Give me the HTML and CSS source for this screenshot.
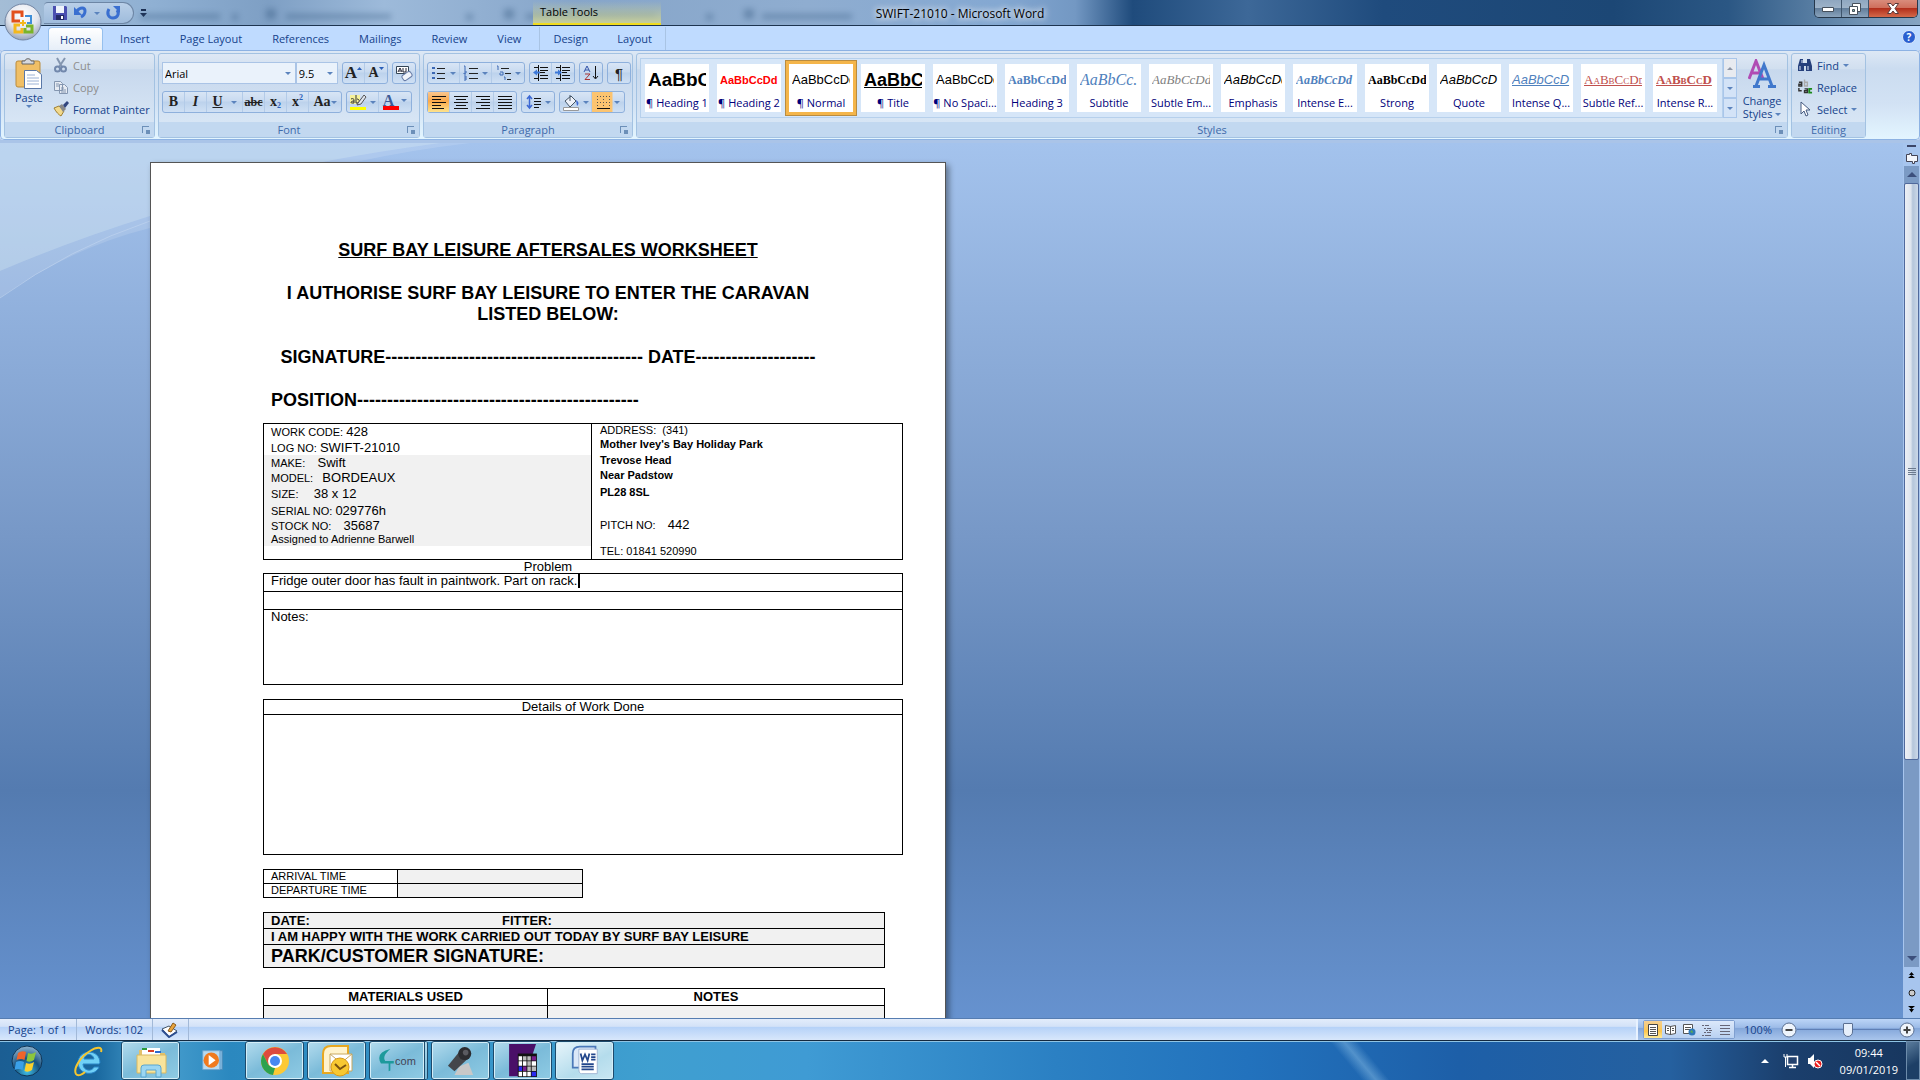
FILE: index.html
```html
<!DOCTYPE html>
<html lang="en">
<head>
  <meta charset="UTF-8" />
  <title>SWIFT-21010 - Microsoft Word</title>
  <meta name="viewport" content="width=device-width, initial-scale=1" />
  <link rel="stylesheet" href="styles.css">
</head>
<body>

<header class="titlebar">
  <div class="quick-access">
    <button class="icon-btn" aria-label="Save">
      <svg width="16" height="16" viewBox="0 0 16 16"><path d="M1 1h13l1 1v13H1z" fill="#4a4fb0"/><path d="M4 1h8v7H4z" fill="#eef3fb"/><path d="M4 10h8v5H4z" fill="#232a66"/><path d="M9 11h2v3H9z" fill="#fff"/></svg>
    </button>
    <button class="icon-btn" aria-label="Undo">
      <svg width="16" height="16" viewBox="0 0 16 16"><path d="M4 6c3-4 8-4 8 0 0 3-2 5-4 6" fill="none" stroke="#3a6fd0" stroke-width="3"/><path d="M1 2v8h8z" fill="#3a6fd0"/></svg>
    </button>
    <span class="caret"></span>
    <button class="icon-btn" aria-label="Repeat">
      <svg width="16" height="16" viewBox="0 0 16 16"><path d="M4 4c-3 5 0 9 4 9s7-4 4-8" fill="none" stroke="#3a6fd0" stroke-width="3"/><path d="M8 1h7v7z" fill="#3a6fd0"/></svg>
    </button>
  </div>
  <button class="icon-btn customise" aria-label="Customise Quick Access Toolbar">
    <svg width="7" height="8" viewBox="0 0 7 8"><path d="M1 0h5v2H1zM0 4h7L3.500 8z" fill="#1c2f52"/></svg>
  </button>
  <svg class="ghost-tabs" viewBox="0 0 1000 24" width="1000" height="24">
    <g fill="#31557c"><rect x="0" y="14" width="80" height="5"/><rect x="92" y="14" width="6" height="6"/><rect x="126" y="9" width="10" height="10"/><rect x="146" y="14" width="105" height="5"/><rect x="326" y="14" width="7" height="6"/><rect x="364" y="9" width="10" height="10"/><rect x="386" y="14" width="130" height="5"/><rect x="566" y="14" width="7" height="6"/><rect x="604" y="9" width="10" height="10"/><rect x="622" y="14" width="90" height="5"/></g>
  </svg>
  <div class="table-tools">Table Tools</div>
  <h1 class="window-title">SWIFT-21010 - Microsoft Word</h1>
  <div class="window-buttons">
    <button class="win-min" aria-label="Minimise"><svg width="12" height="6"><path d="M.5 1.500h11v4H.5z" fill="#fff" stroke="#46505c"/></svg></button>
    <button class="win-max" aria-label="Restore"><svg width="12" height="12"><path d="M3.500.5h8v8h-8z" fill="#fff" stroke="#46505c"/><path d="M.5 3.500h8v8h-8z" fill="#fff" stroke="#46505c"/><path d="M3.500 6.500h2v2h-2z" fill="#8ba" stroke="#46505c"/></svg></button>
    <button class="win-close" aria-label="Close"><svg width="12" height="11"><path d="M.5.5h3.500l2 2.500 2-2.500h3.500L8 5.500l3.500 5H8L6 8l-2 2.500H.5L4 5.500z" fill="#fff" stroke="#5a3a3a"/></svg></button>
  </div>
</header>

<button class="office" aria-label="Office Button">
  <svg width="38" height="38" viewBox="0 0 38 38">
    <defs><radialGradient id="orb" cx="50%" cy="30%" r="75%"><stop offset="0" stop-color="#fff"/><stop offset=".55" stop-color="#e3e6ee"/><stop offset="1" stop-color="#8c99b0"/></radialGradient></defs>
    <circle cx="19" cy="19" r="18" fill="url(#orb)" stroke="#7285a3"/>
    <g fill="none" stroke-width="3"><path d="M16 18H9V9h9v5" stroke="#e2501c"/><path d="M21 13h6v7h-4" stroke="#3f8fd8" stroke-width="2"/><path d="M16 22h-5v7h7v-4" stroke="#f4b81e"/><path d="M22 23h6v6h-7v-4" stroke="#7ab428"/></g>
    <path d="M16 20h6M19 17v6" stroke="#f4b81e" stroke-width="2"/>
  </svg>
</button>

<nav class="tabs">
  <a href="#" class="tab active">Home</a>
  <a href="#" class="tab">Insert</a>
  <a href="#" class="tab">Page Layout</a>
  <a href="#" class="tab">References</a>
  <a href="#" class="tab">Mailings</a>
  <a href="#" class="tab">Review</a>
  <a href="#" class="tab">View</a>
  <div class="context-tabs">
    <a href="#" class="tab">Design</a>
    <a href="#" class="tab">Layout</a>
  </div>
  <button class="help" aria-label="Help">?</button>
</nav>

<section class="ribbon">
  <div class="group clipboard">
    <div class="group-body">
      <button class="big-btn">
        <svg width="28" height="32" viewBox="0 0 28 32"><rect x="1" y="3" width="24" height="26" rx="2" fill="#f0bf66" stroke="#b98b3c"/><path d="M7 6V3h3c0-3 6-3 6 0h3v3z" fill="#d6d9de" stroke="#666"/><path d="M9.500 12.500h12l5 4v14h-17z" fill="#fff" stroke="#5a78a8"/><path d="M12 17h8M12 20h12M12 23h12M12 26h12" stroke="#9bb2d6"/></svg>
        <span>Paste</span>
        <span class="caret"></span>
      </button>
      <div class="stack">
        <button class="row-btn" disabled><svg width="16" height="16" viewBox="0 0 16 16"><path d="M4 1l5 9M12 1L6 10" stroke="#8496b0" stroke-width="2"/><circle cx="4.500" cy="12" r="2.500" fill="none" stroke="#7288ac" stroke-width="2"/><circle cx="10.500" cy="12" r="2.500" fill="none" stroke="#7288ac" stroke-width="2"/></svg>Cut</button>
        <button class="row-btn" disabled><svg width="16" height="16" viewBox="0 0 16 16"><path d="M1.500 2.500h6l2 2v7h-8zM6.500 5.500h5l3 3v6h-8z" fill="#e6ebf3" stroke="#8496b0"/><path d="M3 5h3M3 7h3M8 9h3M8 11h5M8 13h5" stroke="#8496b0"/></svg>Copy</button>
        <button class="row-btn"><svg width="16" height="16" viewBox="0 0 16 16"><path d="M1 7l5-2 5 5-3 5C6 14 3 11 1 7z" fill="#f2d98c" stroke="#a08030"/><path d="M6 5l3-2 4 5-3 3z" fill="#888"/><path d="M10 4l4-4 2 2-4 5z" fill="#31457e"/></svg>Format Painter</button>
      </div>
    </div>
    <div class="group-label">Clipboard<i class="launcher"></i></div>
  </div>

  <div class="group font">
    <div class="group-body rows">
      <div class="tool-row">
        <label class="combo combo-font"><select aria-label="Font"><option>Arial</option></select><span class="caret"></span></label>
        <label class="combo combo-size"><select aria-label="Font Size"><option>9.5</option></select><span class="caret"></span></label>
        <div class="tools after-combo">
          <button class="tool glyph glyph-lg" aria-label="Grow Font">A<svg width="5" height="3"><path d="M0 3h5L2.500 0z" fill="#2b5fb8"/></svg></button>
          <button class="tool glyph" aria-label="Shrink Font">A<svg width="5" height="3"><path d="M0 0h5L2.500 3z" fill="#2b5fb8"/></svg></button>
        </div>
        <div class="tools">
          <button class="tool" aria-label="Clear Formatting"><svg width="18" height="18" viewBox="0 0 18 18"><path d="M1.500 2.500h12v7h-12z" fill="#fff" stroke="#345"/><path d="M3 8l2-4 2 4M8 4v4h3V4M4 7h2" fill="none" stroke="#223"/><rect x="7" y="9" width="10" height="6" rx="2" transform="rotate(-35 12 12)" fill="#f2f4fa" stroke="#667aa5"/></svg></button>
        </div>
      </div>
      <div class="tool-row">
        <div class="tools">
          <button class="tool glyph"><b>B</b></button>
          <button class="tool glyph"><i>I</i></button>
          <button class="tool split-lg glyph"><u>U</u><span class="caret"></span></button>
          <button class="tool glyph strike">abc</button>
          <button class="tool glyph">x<sub>2</sub></button>
          <button class="tool glyph">x<sup>2</sup></button>
          <button class="tool split glyph">Aa<span class="caret"></span></button>
        </div>
        <div class="tools">
          <button class="tool split" aria-label="Highlight"><svg width="18" height="18" viewBox="0 0 18 18"><path d="M1 2h10v9H1z" fill="#f6f29a"/><path d="M2 6c2-1 3 0 3 1v3H3c-2 0-1-2 2-2M7 2v8h1c3 0 3-4 0-4" fill="none" stroke="#333"/><path d="M9 10l6-8 2 2-5 7-4 1z" fill="#dfe4ee" stroke="#555"/><path d="M1 14h16v3H1z" fill="#ff0"/></svg><span class="caret"></span></button>
          <button class="tool split glyph font-colour">A<span class="caret"></span></button>
        </div>
      </div>
    </div>
    <div class="group-label">Font<i class="launcher"></i></div>
  </div>

  <div class="group paragraph">
    <div class="group-body rows">
      <div class="tool-row">
        <div class="tools">
          <button class="tool split" aria-label="Bullets"><svg width="16" height="16" viewBox="0 0 16 16"><path d="M1 2h3v2H1zM1 7h3v2H1zM1 12h3v2H1z" fill="#3c68b4"/><path d="M6 3.500h8M6 8.500h8M6 13.500h8" stroke="#222"/></svg><span class="caret"></span></button>
          <button class="tool split" aria-label="Numbering"><svg width="16" height="16" viewBox="0 0 16 16"><path d="M1 1h1v4M1 6h2v2H1v1h2M1 11h2v4H1M1 13h2" fill="none" stroke="#3c68b4"/><path d="M6 3.500h9M6 8.500h9M6 13.500h9" stroke="#222"/></svg><span class="caret"></span></button>
          <button class="tool split" aria-label="Multilevel List"><svg width="16" height="16" viewBox="0 0 16 16"><path d="M1 1h1v4M4 7h3v3H4V8M8 12h1v3" fill="none" stroke="#3c68b4"/><path d="M5 3.500h8M9 8.500h6M11 14.500h4" stroke="#222"/></svg><span class="caret"></span></button>
        </div>
        <div class="tools">
          <button class="tool" aria-label="Decrease Indent"><svg width="16" height="16" viewBox="0 0 16 16"><path d="M1 2.500h4M7 2.500h8M7 5.500h8M7 7.500h5M7 10.500h8M1 13.500h4M7 13.500h8M5.500 0v16" stroke="#111"/><path d="M0 7.500l4-3v2h3v2H4v2z" fill="#3c78d8"/></svg></button>
          <button class="tool" aria-label="Increase Indent"><svg width="16" height="16" viewBox="0 0 16 16"><path d="M1 2.500h4M7 2.500h8M7 5.500h8M7 7.500h5M7 10.500h8M1 13.500h4M7 13.500h8M5.500 0v16" stroke="#111"/><path d="M7 7.500l-4-3v2H0v2h3v2z" fill="#3c78d8"/></svg></button>
        </div>
        <div class="tools">
          <button class="tool" aria-label="Sort"><svg width="16" height="16" viewBox="0 0 16 16"><path d="M1 7l3-6 3 6M2 5h4" fill="none" stroke="#3454a8"/><path d="M2 9h5l-5 5.500h5" fill="none" stroke="#a83434"/><path d="M12.500 1v12M10 11l2.500 3 2.500-3" fill="none" stroke="#111"/></svg></button>
        </div>
        <div class="tools">
          <button class="tool glyph-sans" aria-label="Show paragraph marks">¶</button>
        </div>
      </div>
      <div class="tool-row">
        <div class="tools">
          <button class="tool on" aria-label="Align Left"><svg width="16" height="14"><path d="M1 1.500h14M1 4.500h9M1 7.500h14M1 10.500h9M1 13.500h12" stroke="#111"/></svg></button>
          <button class="tool" aria-label="Centre"><svg width="16" height="14"><path d="M1 1.500h14M3 4.500h10M1 7.500h14M3 10.500h10M1 13.500h14" stroke="#111"/></svg></button>
          <button class="tool" aria-label="Align Right"><svg width="16" height="14"><path d="M1 1.500h14M6 4.500h9M1 7.500h14M6 10.500h9M1 13.500h14" stroke="#111"/></svg></button>
          <button class="tool" aria-label="Justify"><svg width="16" height="14"><path d="M1 1.500h14M1 4.500h14M1 7.500h14M1 10.500h14M1 13.500h14" stroke="#111"/></svg></button>
        </div>
        <div class="tools">
          <button class="tool split" aria-label="Line Spacing"><svg width="16" height="16" viewBox="0 0 16 16"><path d="M3.500 2v12M1 5l2.500-3L6 5M1 11l2.500 3L6 11" fill="none" stroke="#3c68d4" stroke-width="1.500"/><path d="M8 4.500h7M8 7.500h7M8 10.500h7M8 13.500h5" stroke="#111"/></svg><span class="caret"></span></button>
        </div>
        <div class="tools">
          <button class="tool split" aria-label="Shading"><svg width="18" height="17" viewBox="0 0 18 17"><path d="M3 7l6-5 5 5-6 6z" fill="#eef2fa" stroke="#456"/><path d="M8 1v6" stroke="#456"/><path d="M14 6c3 2 3 4 1 6z" fill="#3c68d4"/><path d="M1.500 13.500h15v3h-15z" fill="#fff" stroke="#999"/></svg><span class="caret"></span></button>
          <button class="tool split on-first" aria-label="Borders"><svg width="15" height="15" viewBox="0 0 15 15"><path d="M1.500 1v11M7.500 1v11M13.500 1v11M1 1.500h13M1 7.500h13" stroke="#555" stroke-dasharray="1 2"/><path d="M1 13.500h13" stroke="#111"/></svg><span class="caret"></span></button>
        </div>
      </div>
    </div>
    <div class="group-label">Paragraph<i class="launcher"></i></div>
  </div>

  <div class="group styles">
    <div class="group-body">
      <div class="gallery">
        <button class="style-item"><span class="preview p-h1">AaBbC</span><span class="name">¶ Heading 1</span></button>
        <button class="style-item"><span class="preview p-h2">AaBbCcDd</span><span class="name">¶ Heading 2</span></button>
        <button class="style-item selected"><span class="preview">AaBbCcDd</span><span class="name">¶ Normal</span></button>
        <button class="style-item"><span class="preview p-title">AaBbC</span><span class="name">¶ Title</span></button>
        <button class="style-item"><span class="preview">AaBbCcDd</span><span class="name">¶ No Spaci...</span></button>
        <button class="style-item"><span class="preview p-h3">AaBbCcDd</span><span class="name">Heading 3</span></button>
        <button class="style-item"><span class="preview p-subtitle">AaBbCc.</span><span class="name">Subtitle</span></button>
        <button class="style-item"><span class="preview p-subtle">AaBbCcDd</span><span class="name">Subtle Em...</span></button>
        <button class="style-item"><span class="preview p-em">AaBbCcDd</span><span class="name">Emphasis</span></button>
        <button class="style-item"><span class="preview p-intense">AaBbCcDd</span><span class="name">Intense E...</span></button>
        <button class="style-item"><span class="preview p-strong">AaBbCcDd</span><span class="name">Strong</span></button>
        <button class="style-item"><span class="preview p-em">AaBbCcD</span><span class="name">Quote</span></button>
        <button class="style-item"><span class="preview p-iquote">AaBbCcD</span><span class="name">Intense Q...</span></button>
        <button class="style-item"><span class="preview p-ref">AaBbCcDd</span><span class="name">Subtle Ref...</span></button>
        <button class="style-item"><span class="preview p-ref p-ref-bold">AaBbCcD</span><span class="name">Intense R...</span></button>
      </div>
      <div class="gallery-scroll">
        <button disabled aria-label="Previous row"><span class="caret up"></span></button>
        <button aria-label="Next row"><span class="caret"></span></button>
        <button aria-label="More styles"><span class="caret more"></span></button>
      </div>
      <button class="big-btn change-styles">
        <svg width="28" height="29" viewBox="0 0 28 29"><path d="M1 20L8 2l7 18M4 14h8" fill="none" stroke="#b04cb4" stroke-width="3"/><path d="M8 27L16 6l8 21M11 20h10M5 27.500h7M20 27.500h8" fill="none" stroke="#4078cc" stroke-width="3"/></svg>
        <span>Change</span>
        <span>Styles <span class="caret"></span></span>
      </button>
    </div>
    <div class="group-label">Styles<i class="launcher"></i></div>
  </div>

  <div class="group editing">
    <div class="group-body">
      <div class="stack">
        <button class="row-btn"><svg width="16" height="16" viewBox="0 0 16 16"><path d="M3 2h3v4h4V2h3l2 7v5H9V9H7v5H1V9z" fill="#26407c"/><path d="M3 9v4M11 9v4M5 3v3" stroke="#dfe8f8"/></svg>Find <span class="caret"></span></button>
        <button class="row-btn"><svg width="16" height="16" viewBox="0 0 17 16"><path d="M2 3h3v4H2V5h3" fill="none" stroke="#333" stroke-width="1.500"/><path d="M8 0v7h3V3H8" fill="none" stroke="#aaa" stroke-width="1.500"/><path d="M2 9v3h3M8 10h3v4H8v-2h3" fill="none" stroke="#333" stroke-width="1.500"/><path d="M16 10h-3v4h3" fill="none" stroke="#1a8a1a" stroke-width="2"/></svg>Replace</button>
        <button class="row-btn"><svg width="16" height="16" viewBox="0 0 16 16"><path d="M4 1v12l3-3 2 5 2-1-2-5h4z" fill="#fff" stroke="#455a80"/></svg>Select <span class="caret"></span></button>
      </div>
    </div>
    <div class="group-label">Editing</div>
  </div>
</section>

<main class="workspace">
  <svg class="swoosh" width="560" height="400" viewBox="0 0 560 400">
    <path d="M0 0h470Q300 20 150 85Q70 105 0 155z" fill="#fff" fill-opacity=".13"/>
    <path d="M0 0h440Q220 30 150 73Q70 98 0 128z" fill="#dff0f4" fill-opacity=".28"/>
    <path d="M0 155Q70 105 150 78" fill="none" stroke="#c8daf2" stroke-opacity=".5"/>
  </svg>

  <article class="page">
    <h2 class="doc-title">SURF BAY LEISURE AFTERSALES WORKSHEET</h2>
    <p class="authorise">I AUTHORISE SURF BAY LEISURE TO ENTER THE CARAVAN LISTED BELOW:</p>
    <p class="authorise">SIGNATURE------------------------------------------- DATE--------------------</p>
    <p class="position">POSITION-----------------------------------------------</p>

    <table class="details">
      <tr>
        <td class="unit">
          <div class="line first">WORK CODE: <b>428</b></div>
          <div class="line">LOG NO: <b>SWIFT-21010</b></div>
          <div class="shaded">
            <div class="line">MAKE: &nbsp;&nbsp; <b>Swift</b></div>
            <div class="line">MODEL: &nbsp; <b>BORDEAUX</b></div>
            <div class="line roomy">SIZE: &nbsp;&nbsp;&nbsp; <b>38 x 12</b></div>
            <div class="line">SERIAL NO: <b>029776h</b></div>
            <div class="line">STOCK NO: &nbsp;&nbsp; <b>35687</b></div>
            <div class="line small">Assigned to Adrienne Barwell</div>
          </div>
        </td>
        <td class="site">
          <div class="line small">ADDRESS: &nbsp;(341)</div>
          <address>
            <div class="line first">Mother Ivey's Bay Holiday Park</div>
            <div class="line">Trevose Head</div>
            <div class="line">Near Padstow</div>
            <div class="line roomy">PL28 8SL</div>
          </address>
          <div class="line pitch">PITCH NO: &nbsp;&nbsp; <b>442</b></div>
          <div class="line tel">TEL: 01841 520990</div>
        </td>
      </tr>
    </table>

    <p class="problem">Problem</p>
    <table class="notes">
      <tr><td>Fridge outer door has fault in paintwork. Part on rack.<span class="cursor"></span></td></tr>
      <tr><td></td></tr>
      <tr class="notes-row"><td>Notes:</td></tr>
    </table>

    <table class="work">
      <tr><th>Details of Work Done</th></tr>
      <tr class="work-row"><td></td></tr>
    </table>

    <table class="times">
      <tr><th>ARRIVAL TIME</th><td></td></tr>
      <tr><th>DEPARTURE TIME</th><td></td></tr>
    </table>

    <table class="sign-off">
      <tr><td><div class="date-fitter"><span>DATE:</span><span>FITTER:</span></div></td></tr>
      <tr><td>I AM HAPPY WITH THE WORK CARRIED OUT TODAY BY SURF BAY LEISURE</td></tr>
      <tr class="customer"><td>PARK/CUSTOMER SIGNATURE:</td></tr>
    </table>

    <table class="materials">
      <tr><th class="used">MATERIALS USED</th><th>NOTES</th></tr>
      <tr><td></td><td></td></tr>
      <tr><td></td><td></td></tr>
    </table>
  </article>

  <aside class="scrollbar">
    <span class="splitter"></span>
    <button aria-label="View Ruler"><svg width="12" height="12" viewBox="0 0 12 12"><path d="M.5 2.500h3v-1h2v2h6v6h-3v2h-2v-2h-6z" fill="#f4f6fb" stroke="#445"/></svg></button>
    <div class="track">
      <button aria-label="Scroll up"><span class="caret up dark"></span></button>
      <div class="thumb"><span class="grip"></span></div>
      <button class="down" aria-label="Scroll down"><span class="caret dark"></span></button>
    </div>
    <button class="browse" aria-label="Previous Page"><svg width="7" height="7"><path d="M3.500 0L6 3H1zM3.500 3L7 6H0z"/></svg></button>
    <button class="browse" aria-label="Select Browse Object"><svg width="8" height="8"><circle cx="4" cy="4" r="3" fill="#ccc" stroke="#222"/></svg></button>
    <button class="browse" aria-label="Next Page"><svg width="7" height="7"><path d="M0 0h7L3.500 3zM1 3h5L3.500 6.500z"/></svg></button>
  </aside>
</main>

<footer class="statusbar">
  <span class="status">Page: 1 of 1</span>
  <span class="status">Words: 102</span>
  <button class="status proof" aria-label="Proofing"><svg width="18" height="16" viewBox="0 0 18 16"><path d="M1 7l7-3 8 5-8 6z" fill="#fff" stroke="#456"/><path d="M1 8l7 7 8-5" fill="none" stroke="#2b4d90" stroke-width="2"/><path d="M7 9l5-8 3 2-5 7z" fill="#e8a33c" stroke="#8a5a1a"/></svg></button>
  <div class="status-right">
    <div class="views">
      <button class="on" aria-label="Print Layout"><svg width="12" height="12"><path d="M1.500.5h9v11h-9z" fill="#fff" stroke="#444"/><path d="M3 3.500h6M3 5.500h6M3 7.500h6M3 9.500h6" stroke="#555"/></svg></button>
      <button aria-label="Full Screen Reading"><svg width="12" height="12"><path d="M.5 1.500l5 1 5-1v8l-5 1-5-1zM5.500 2v9" fill="#fff" stroke="#555"/><path d="M2 4.500h2M2 6.500h2M7 4.500h2M7 6.500h2" stroke="#555"/></svg></button>
      <button aria-label="Web Layout"><svg width="13" height="12"><path d="M.5.5h9v9h-9z" fill="#fff" stroke="#555"/><path d="M2 3.500h6M2 5.500h6" stroke="#555"/><circle cx="9" cy="8" r="3.500" fill="#2f78b8"/><path d="M7 8l2-2 1 3z" fill="#5fb04a"/></svg></button>
      <button aria-label="Outline"><svg width="12" height="12"><path d="M1 1.500h7M3 4.500h7M5 6.500h6M3 8.500h7M1 11.500h9" stroke="#667" stroke-dasharray="2 1 9"/></svg></button>
      <button aria-label="Draft"><svg width="12" height="12"><path d="M1 1.500h10M1 4.500h10M1 7.500h10M1 10.500h10" stroke="#667"/></svg></button>
    </div>
    <label class="zoom-label" for="zoom">100%</label>
    <button class="zoom-btn" aria-label="Zoom out"><svg width="16" height="16"><circle cx="8" cy="8" r="7" fill="#eef4fc" stroke="#5a6f92"/><path d="M4.500 8h7" stroke="#444" stroke-width="2"/></svg></button>
    <input id="zoom" class="zoom" type="range" min="10" max="190" value="100">
    <button class="zoom-btn" aria-label="Zoom in"><svg width="16" height="16"><circle cx="8" cy="8" r="7" fill="#eef4fc" stroke="#5a6f92"/><path d="M4.500 8h7M8 4.500v7" stroke="#444" stroke-width="2"/></svg></button>
  </div>
</footer>

<div class="taskbar">
  <button class="start" aria-label="Start">
    <svg width="38" height="38" viewBox="0 0 38 38">
      <defs><radialGradient id="start" cx="50%" cy="85%" r="85%"><stop offset="0" stop-color="#3fc0e8"/><stop offset=".5" stop-color="#17517f"/><stop offset="1" stop-color="#8fb6d2"/></radialGradient></defs>
      <circle cx="19" cy="19" r="15" fill="url(#start)" stroke="#0f3556"/>
      <path d="M10 11q4-3 8-1l-1.500 8q-4-2-8 0z" fill="#f0642a"/><path d="M20 11q4 2 8-1l-2 8q-4 3-7.500 1z" fill="#8cc63c"/><path d="M8 20q4-2 8 0l-1.500 8q-4-2-8 0z" fill="#3aa0e8"/><path d="M18 21q4 2 8-1l-2 8q-4 3-7.500 1z" fill="#fcd02c"/>
    </svg>
  </button>
  <button class="task plain" aria-label="Internet Explorer">
    <svg width="32" height="32" viewBox="0 0 32 32"><path d="M26 19H10c0 7 9 8 11 3h5c-3 9-20 9-21-4C5 4 27 3 27 18zM11 14h10c-1-6-9-6-10 0z" fill="#6fd0f6" stroke="#2a86c8"/><path d="M28 7c2-6-5-5-11-1C7 12 0 24 3 29c2 3 7 0 9-2" fill="none" stroke="#f6c62e" stroke-width="2"/></svg>
  </button>
  <button class="task" aria-label="Explorer">
    <svg width="34" height="34" viewBox="0 0 34 34"><path d="M5 6h7l2 3h17v20H5z" fill="#e3c16a"/><path d="M8 4h18v8H8z" fill="#fff"/><path d="M8 4h5v2H8z" fill="#2a9a3a"/><path d="M14 6h6v2h-6z" fill="#d8402a"/><path d="M21 7h6v2h-6z" fill="#2a6ad0"/><path d="M3 11h29v18H3z" fill="#f8e49c" stroke="#d8b860"/><path d="M7 33v-9q0-3 3-3h14q3 0 3 3v9h-5v-7H12v7z" fill="#9bd6f2" stroke="#5aa6d0"/></svg>
  </button>
  <button class="task plain" aria-label="Media Player">
    <svg width="24" height="26" viewBox="0 2 28 28"><path d="M7 4h18v22H7z" fill="#7db4dc" stroke="#4a8ab8"/><path d="M2 4h20v22H2z" fill="#b8daf0" stroke="#6aa4d0"/><circle cx="12" cy="15" r="9" fill="#f07a1e"/><path d="M9 9l8 6-8 6z" fill="#fff"/></svg>
  </button>
  <button class="task" aria-label="Chrome">
    <svg width="30" height="30" viewBox="0 0 30 30"><circle cx="15" cy="15" r="14" fill="#fcc934"/><path d="M3 8A14 14 0 0 1 27 8H15L8.500 19z" fill="#dd4b3e"/><path d="M3 8L8.500 19 15 22l-2 7A14 14 0 0 1 3 8z" fill="#2da24f"/><circle cx="15" cy="15" r="7" fill="#fff"/><circle cx="15" cy="15" r="5" fill="#4688f1"/></svg>
  </button>
  <button class="task" aria-label="Outlook">
    <svg width="34" height="34" viewBox="0 0 34 34"><path d="M3 10q0-8 8-8h17v27H3z" fill="#fff3cc" stroke="#e8a820" stroke-width="2"/><path d="M10 10h22v17H10z" fill="#fff" stroke="#c8a860"/><path d="M10 10l11 9 11-9" fill="none" stroke="#c8a860"/><circle cx="20" cy="23" r="9" fill="#f8c832" stroke="#d89a18"/><path d="M15 20l5 5 6-4" fill="none" stroke="#7a5210" stroke-width="2"/></svg>
  </button>
  <button class="task stacked" aria-label="4com">
    <svg width="17" height="24" viewBox="0 0 17 28"><path d="M13 0Q-5 4 2 17h9v9l2-1v-8h4v-3H7Q3 8 13 0z" fill="#1d9a9c"/></svg><span>com</span>
  </button>
  <button class="task" aria-label="Webcam">
    <svg width="28" height="30" viewBox="0 0 30 32"><path d="M13 22l10-4 5 13H8z" fill="#c8c8c8"/><path d="M1 21L15 4l9 8-16 15z" fill="#44464a"/><circle cx="19" cy="8" r="7" fill="#2c2c30"/><circle cx="20" cy="7" r="3" fill="#5a5a60"/></svg>
  </button>
  <button class="task" aria-label="Planner">
    <svg width="30" height="33" viewBox="0 0 34 38"><path d="M1 0h31l-4 12v25H1z" fill="#4a0f68"/><path d="M11 11h22v27H11z" fill="#111"/><g fill="#fff"><path d="M12 14h4v5h-4zM12 20h4v5h-4zM17 20h4v5h-4zM12 32h4v5h-4zM17 32h4v5h-4zM22 32h4v5h-4zM27 20h5v5h-5z"/></g><g fill="#bbb"><path d="M17 14h4v5h-4zM22 14h4v5h-4zM27 26h5v5h-5zM22 20h4v5h-4zM22 26h4v5h-4z"/></g><path d="M27 14h5v5h-5zM17 26h4v5h-4z" fill="#7a1f8a"/><path d="M12 26h4v5h-4zM27 32h5v5h-5z" fill="#2a2af0"/></svg>
  </button>
  <button class="task current" aria-label="Word">
    <svg width="28" height="31" viewBox="0 0 32 34"><path d="M2 9q0-8 8-8h18v24H2z" fill="#dbe8f8" stroke="#4a78b8" stroke-width="2"/><path d="M9 4h21v28H12q-3 0-3-5z" fill="#fff" stroke="#9ab0d0"/><path d="M11 9l2 8 3-7 3 7 2-8" fill="none" stroke="#23478c" stroke-width="2"/><path d="M23 10h5M23 13h5M23 16h5M12 21h14M12 24h14M12 27h14" stroke="#23478c" stroke-width="2"/></svg>
  </button>
  <div class="tray">
    <span class="caret up tray-up"></span>
    <svg width="16" height="16" viewBox="0 0 16 16"><path d="M4.500 3.500h10v8h-10zM6 14.500h7M9.500 12v2" fill="#24426e" stroke="#fff" stroke-width="1.500"/><path d="M1 1v3h3V1M2.500 4v10" fill="none" stroke="#fff"/></svg>
    <svg width="16" height="16" viewBox="0 0 16 16"><path d="M1 5h2l4-4v14l-4-4H1z" fill="#fff"/><circle cx="11" cy="11" r="4" fill="#e81c1c" stroke="#fff"/><path d="M9 9l4 4" stroke="#fff" stroke-width="1.500"/></svg>
    <div class="clock"><time>09:44</time><time>09/01/2019</time></div>
    <button class="show-desktop" aria-label="Show desktop"></button>
  </div>
</div>

</body>
</html>
```
FILE: styles.css
```css
* {
  box-sizing: border-box;
}
body {
  margin: 0;
  height: 100vh;
  display: flex;
  flex-direction: column;
  overflow: hidden;
  position: relative;
  font-family: "Open Sans", "Noto Sans", sans-serif;
  font-size: 11px;
  color: #15428b;
}
button {
  font: inherit;
  color: inherit;
  background: none;
  border: 0;
  padding: 0;
}
a {
  color: inherit;
  text-decoration: none;
}
svg {
  display: block;
  flex: none;
}
h1, h2, p, address {
  margin: 0;
  font-style: normal;
}
.caret {
  display: inline-block;
  border: 3px solid transparent;
  border-top-color: #5b83bd;
  border-bottom: 0;
}
.caret.up {
  border-top: 0;
  border-bottom: 3px solid #8d96a5;
}
.caret.dark {
  border-width: 5px;
  border-top-color: #3c4f7c;
  border-bottom: 0;
}
.caret.up.dark {
  border-top: 0;
  border-bottom: 5px solid #3c4f7c;
}

/* Title bar */
.titlebar {
  position: relative;
  flex: none;
  height: 26px;
  display: flex;
  border-bottom: 1px solid #1d3450;
  background: linear-gradient(90deg, #a4bdd6 0, #8fb0d3 8%, #7e9fc4 14%, #9dbada 20%, #86a5c9 30%, #8fadd0 42%, #84a8d2 52%, #7398c3 56%, #1f4b7c 59%, #3d6898 65%, #1f4b7d 72%, #1c4775 84%, #2b5784 90%, #7193b4 97%, #86a4c2 100%);
}
.quick-access {
  display: flex;
  align-items: center;
  gap: 5px;
  height: 22px;
  width: 90px;
  margin: 2px 0 0 44px;
  padding-left: 8px;
  border: 1px solid #6d86a5;
  border-left: 0;
  border-radius: 4px 11px 11px 0;
  background: linear-gradient(#b9cfe8, #9fbcdc);
}
.icon-btn {
  display: flex;
  align-items: center;
}
.customise {
  margin-left: 6px;
}
.ghost-tabs {
  position: absolute;
  left: 140px;
  top: 0;
  opacity: .4;
  filter: blur(3px);
}
.table-tools {
  position: absolute;
  left: 533px;
  bottom: 0;
  width: 128px;
  padding-left: 7px;
  line-height: 22px;
  color: #000;
  background: linear-gradient(#c5cd9a00, #c5cd9a);
  border-bottom: 2px solid #f0dc1e;
}
.window-title {
  position: absolute;
  left: 0;
  right: 0;
  top: 4px;
  text-align: center;
  font-size: 12px;
  font-weight: 400;
  line-height: 20px;
  color: #000;
  text-shadow: 0 0 6px #fff, 0 0 8px #fff;
}
.window-buttons {
  position: relative;
  display: flex;
  height: 18px;
  margin: 0 2px 0 auto;
  border: 1px solid #26384c;
  border-top: 0;
  border-radius: 0 0 5px 5px;
  overflow: hidden;
}
.window-buttons button {
  display: flex;
  justify-content: center;
  align-items: center;
  width: 27px;
  border-right: 1px solid #3f556d;
  background: linear-gradient(#8fa7c0, #9db2c8 45%, #627e9b 50%, #8aa3bc);
}
.window-buttons .win-close {
  width: 48px;
  border: 0;
  background: linear-gradient(#d98c7c, #cf6f5c 45%, #b22f1c 50%, #d4694a);
}
.office {
  position: absolute;
  left: 4px;
  top: 3px;
  z-index: 2;
}

/* Ribbon tabs */
.tabs {
  position: relative;
  flex: none;
  display: flex;
  align-items: flex-end;
  gap: 4px;
  height: 24px;
  padding-left: 48px;
  background: #bfdbff;
  font-size: 11px;
}
.tab {
  height: 23px;
  padding: 0 13px;
  line-height: 24px;
}
.tab.active {
  border: 1px solid #96c0ee;
  border-bottom: 0;
  border-radius: 4px 4px 0 0;
  padding: 0 11px;
  background: linear-gradient(#fff, #e6eef8);
}
.context-tabs {
  display: flex;
  gap: 3px;
  margin-left: 1px;
  border: solid #a9c4e4;
  border-width: 0 1px;
}
.help {
  width: 14px;
  height: 14px;
  margin: 0 4px 6px auto;
  border: 1px solid #dce8fa;
  border-radius: 50%;
  background: #2a5fd0;
  color: #fff;
  font-size: 10px;
  font-weight: 700;
  line-height: 12px;
}

/* Ribbon */
.ribbon {
  flex: none;
  display: flex;
  gap: 3px;
  height: 90px;
  margin: 0;
  padding: 2px 53px 3px 3px;
  border: 1px solid #8db2e3;
  border-radius: 4px;
  background: linear-gradient(#dde8f5, #cbdcf0 20%, #d2e2f4 60%, #e3f5ff);
  box-shadow: 0 0 0 3px #b2cbee;
}
.group {
  display: flex;
  flex-direction: column;
  height: 85px;
  border: 1px solid #a3c2e2;
  border-radius: 3px;
  background: linear-gradient(#dee8f5, #d1dfef 18%, #c7d8ed 19%, #d8e6f5 85%);
}
.group-body {
  flex: 1;
  display: flex;
}
.group-label {
  position: relative;
  height: 15px;
  line-height: 15px;
  text-align: center;
  font-size: 11px;
  color: #3e6aaa;
  background: #c2d8f0;
}
.launcher {
  position: absolute;
  right: 5px;
  top: 4px;
  width: 7px;
  height: 7px;
  border: solid #6c8fb8;
  border-width: 1px 0 0 1px;
}
.launcher::after {
  content: "";
  position: absolute;
  left: 3px;
  top: 3px;
  width: 4px;
  height: 4px;
  background: #6c8fb8;
}
.clipboard { width: 151px; }
.font { width: 262px; }
.paragraph { width: 210px; }
.styles { flex: 1; min-width: 0; }
.editing { width: 75px; }
.big-btn {
  display: flex;
  flex-direction: column;
  align-items: center;
  width: 46px;
  padding: 4px 0 0 2px;
  line-height: 15px;
}
.stack {
  display: flex;
  flex-direction: column;
  padding-left: 2px;
}
.row-btn {
  display: flex;
  align-items: center;
  gap: 4px;
  height: 22px;
  white-space: nowrap;
}
.row-btn:disabled {
  color: #8d8d8d;
}
.rows {
  flex-direction: column;
  gap: 7px;
  padding: 8px 3px 0;
}
.tool-row {
  display: flex;
  gap: 4px;
}
.combo {
  display: flex;
  align-items: center;
  height: 22px;
  border: 1px solid #aac4e6;
  background: #eaf2fb;
}
.combo select {
  flex: 1;
  min-width: 0;
  appearance: none;
  border: 0;
  padding: 0 2px;
  background: none;
  font: inherit;
  color: #000;
}
.combo .caret {
  margin-right: 4px;
}
.combo-font { width: 136px; }
.combo-size { width: 43px; margin-left: -4px; }
.tools {
  display: flex;
  height: 22px;
  border: 1px solid #8eb0dc;
  border-radius: 3px;
  background: linear-gradient(#d8e5f5, #c8daf0 45%, #bcd2ec 50%, #cfe0f4);
}
.tool {
  display: flex;
  align-items: center;
  justify-content: center;
  gap: 3px;
  width: 22px;
  border-right: 1px solid #b3cbe8;
}
.tool:last-child {
  border-right: 0;
}
.tool.split { width: 32px; }
.tool.split-lg { width: 36px; gap: 8px; }
.tool.on {
  background: linear-gradient(#f9c690, #fba94a 45%, #fde28c);
}
.tool.on-first {
  background: linear-gradient(90deg, #fcc470 20px, transparent 21px);
}
.glyph {
  font-family: "Liberation Serif", serif;
  font-size: 14px;
  font-weight: 700;
  color: #222;
  gap: 0;
}
.glyph svg {
  align-self: flex-start;
  margin-top: 4px;
}
.glyph sup,
.glyph sub {
  font-size: 8px;
  line-height: 8px;
  color: #2b5fb8;
}
.glyph sup { align-self: flex-start; margin-top: 2px; }
.glyph sub { align-self: flex-end; margin-bottom: 2px; }
.glyph-lg { font-size: 17px; }
.strike {
  font-size: 12px;
  text-decoration: line-through;
}
.glyph-sans {
  font-family: "Liberation Sans", sans-serif;
  font-size: 15px;
  color: #222;
}
.font-colour {
  font-size: 16px;
  line-height: 13px;
  gap: 7px;
  color: #3d5a96;
  background: linear-gradient(red, red) 4px 14px / 16px 4px no-repeat;
  padding-bottom: 3px;
}

/* Styles gallery */
.gallery {
  flex: 1;
  min-width: 0;
  display: flex;
  gap: 8px;
  height: 60px;
  margin: 4px 0 0 3px;
  padding: 5px 5px 0 4px;
  overflow: hidden;
  border: 1px solid #b6d0ec;
  background: #d6e6f8;
}
.style-item {
  flex: none;
  display: flex;
  flex-direction: column;
  align-items: center;
  width: 64px;
  height: 48px;
  background: #fff;
}
.style-item.selected {
  outline: 3px solid #f4b54a;
  box-shadow: 0 0 0 4px #b98c40;
}
.preview {
  width: 58px;
  height: 30px;
  overflow: hidden;
  white-space: nowrap;
  text-align: left;
  font-family: "Liberation Sans", sans-serif;
  font-size: 13px;
  line-height: 32px;
  color: #000;
}
.name {
  width: 64px;
  line-height: 18px;
  white-space: nowrap;
  text-align: center;
  color: #00007a;
}
.p-h1 { font-size: 19px; font-weight: 700; }
.p-h2 { font-size: 11px; font-weight: 700; color: red; }
.p-title { font-size: 18px; font-weight: 700; text-decoration: underline; }
.p-h3, .p-subtitle, .p-strong, .p-ref, .p-intense, .p-subtle { font-family: "Liberation Serif", serif; }
.p-h3 { font-size: 12px; font-weight: 700; color: #4f81bd; }
.p-subtitle { font-size: 16px; font-style: italic; color: #4f81bd; }
.p-subtle { font-style: italic; color: #808080; }
.p-em { font-style: italic; }
.p-intense { font-size: 12px; font-weight: 700; font-style: italic; color: #4f81bd; }
.p-strong { font-size: 12px; font-weight: 700; }
.p-iquote { font-style: italic; color: #4f81bd; text-decoration: underline; }
.p-ref { font-variant: small-caps; color: #c0504d; text-decoration: underline; }
.p-ref-bold { font-weight: 700; }
.gallery-scroll {
  display: grid;
  grid-template-rows: repeat(3, 20px);
  width: 14px;
  margin-top: 4px;
}
.gallery-scroll button {
  display: flex;
  align-items: center;
  justify-content: center;
  border: 1px solid #a9c6ea;
  background: #d3e3f7;
}
.gallery-scroll button:disabled {
  background: #e8ebf0;
}
.caret.more {
  box-shadow: 0 -5px 0 -2px #5b83bd;
}
.change-styles {
  width: 50px;
  padding: 5px 0 0;
  line-height: 13px;
}
.change-styles svg {
  margin-bottom: 6px;
}
.change-styles .caret {
  vertical-align: 2px;
}
.editing .stack { padding-left: 5px; }

/* Workspace */
.workspace {
  position: relative;
  flex: 1;
  min-height: 0;
  display: flex;
  justify-content: space-between;
  overflow: hidden;
  border-top: 3px solid #aac4e8;
  background: linear-gradient(#a4c3ed, #7798c7 45%, #547bb0 74%, #6692cf);
}
.swoosh {
  position: absolute;
  left: 0;
  top: 0;
}
.page {
  position: relative;
  flex: none;
  width: 796px;
  height: 1123px;
  margin: 19px 0 0 150px;
  padding: 77px 120px 0;
  border: 1px solid #555;
  background: #fff;
  box-shadow: 3px 3px 6px #0006;
  font-family: "Liberation Sans", Arial, sans-serif;
  font-size: 13px;
  line-height: 15px;
  color: #000;
}
.doc-title,
.authorise,
.position {
  margin-bottom: 22px;
  font-size: 18px;
  font-weight: 700;
  line-height: 21px;
}
.doc-title {
  text-align: center;
  text-decoration: underline;
}
.authorise {
  text-align: center;
}
.position {
  margin-bottom: 12px;
}
.page table {
  width: 640px;
  margin: 0 0 14px -8px;
  border-collapse: collapse;
  table-layout: fixed;
}
.page td,
.page th {
  padding: 0 7px;
  border: 1px solid #000;
  vertical-align: top;
  text-align: left;
  font-weight: 400;
}
.page .details {
  margin-bottom: 0;
}
.page .details td {
  height: 136px;
  padding: 0;
}
.details .unit { width: 328px; }
.line {
  height: 15px;
  padding: 0 7px;
  font-size: 11px;
  line-height: 15px;
  white-space: nowrap;
}
.line b {
  font-size: 13px;
  font-weight: 400;
}
.line.first { height: 16px; }
.line.small { height: 13px; line-height: 13px; }
.unit .roomy { height: 18px; line-height: 18px; }
.shaded { background: #f1f1f1; }
.site .line { padding-left: 8px; }
.site .roomy { height: 18px; line-height: 18px; }
.site address { font-weight: 700; }
.site .pitch { margin-top: 16px; }
.site .tel { margin-top: 12px; }
.problem {
  text-align: center;
  line-height: 13px;
}
.notes tr { height: 18px; }
.page .notes td { line-height: 13px; }
.notes .notes-row { height: 75px; }
.cursor {
  display: inline-block;
  width: 2px;
  height: 14px;
  margin-left: 1px;
  background: #000;
  vertical-align: top;
}
.page .work th {
  height: 15px;
  line-height: 13px;
  text-align: center;
}
.work .work-row { height: 140px; }
.page .times {
  width: 320px;
}
.page .times th {
  width: 134px;
  font-size: 11px;
  line-height: 13px;
}
.times td, .sign-off td, .materials td { background: #f1f1f1; }
.page .sign-off,
.page .materials {
  width: 622px;
}
.page .sign-off {
  margin-bottom: 20px;
}
.page .sign-off td,
.page .materials th {
  font-weight: 700;
}
.date-fitter {
  display: grid;
  grid-template-columns: 231px 1fr;
}
.page .customer td {
  font-size: 18px;
  line-height: 22px;
}
.page .materials th {
  height: 17px;
  text-align: center;
}
.materials .used { width: 284px; }
.materials tr { height: 17px; }

/* Vertical scrollbar */
.scrollbar {
  display: flex;
  flex-direction: column;
  align-items: center;
  width: 17px;
  background: #a7c5ee;
}
.scrollbar button {
  display: flex;
  align-items: center;
  justify-content: center;
  height: 17px;
}
.splitter {
  width: 9px;
  height: 2px;
  margin: 2px 0;
  background: #3c4668;
}
.track {
  flex: 1;
  display: flex;
  flex-direction: column;
  align-items: center;
  width: 15px;
  background: #7b9ac4;
}
.thumb {
  display: flex;
  align-items: center;
  justify-content: center;
  width: 15px;
  flex: 0 0 72%;
  border: 1px solid #50699c;
  border-radius: 2px;
  background: linear-gradient(90deg, #eceff5, #dde4ee 45%, #b4c5da 60%, #cbd8e8);
}
.grip {
  width: 8px;
  height: 7px;
  background: repeating-linear-gradient(#6c7a8e 0 1px, transparent 1px 2px);
}
.down {
  margin-top: auto;
}

/* Status bar */
.statusbar {
  flex: none;
  display: flex;
  height: 22px;
  border-top: 1px solid #567db1;
  background: linear-gradient(#e3edfb, #d3e2f8 35%, #b6d2f8 40%, #d8e7fb);
  font-size: 11px;
  line-height: 21px;
}
.status {
  padding: 0 9px 0 8px;
  border-right: 1px solid #a2b9d8;
}
.status-right {
  display: flex;
  align-items: center;
  margin-left: auto;
  padding: 0 5px;
  border-left: 2px solid #e8f2ff;
  background: linear-gradient(#bcd5f7, #9dbce8 40%, #84a7da 45%, #a9c5ec);
}
.views {
  display: flex;
  border: 1px solid #7f9fd0;
  border-radius: 2px;
}
.views button {
  display: flex;
  align-items: center;
  justify-content: center;
  width: 18px;
  height: 17px;
  background: linear-gradient(#dbe8fa, #b9d1f2);
}
.views .on {
  background: linear-gradient(#f3cf94, #fdc64e 60%, #fdeb9c);
}
.zoom-label {
  margin: 0 9px;
}
.zoom {
  appearance: none;
  width: 102px;
  height: 16px;
  margin: 0;
  background: linear-gradient(#5f7fb5, #5f7fb5) center / 100% 1px no-repeat;
}
.zoom::-webkit-slider-thumb {
  appearance: none;
  width: 10px;
  height: 14px;
  border: 1px solid #5a6f92;
  border-radius: 1px 1px 5px 5px;
  background: #e6effb;
}

/* Windows taskbar */
.taskbar {
  flex: none;
  display: flex;
  align-items: stretch;
  height: 40px;
  border-top: 1px solid #14293f;
  background:
    linear-gradient(50deg, transparent 44%, #9fd0f066 50%, transparent 56%) 1260px 0 / 200px 40px no-repeat,
    linear-gradient(90deg, #1b5e93 0, #19689f 5%, #4aa0cf 8%, #2b88bf 12%, #3f9fd0 34%, #3f9bd4 42%, #2b80c3 55%, #2272bd 65%, #1d5fa8 76%, #25609f 87%, #1b3f6d 93%, #17365e 100%);
  box-shadow: inset 0 1px #8fc4e4;
}
.start {
  width: 54px;
  display: flex;
  justify-content: center;
  align-items: center;
}
.task {
  display: flex;
  align-items: center;
  justify-content: center;
  width: 59px;
  margin-right: 3px;
  border: 1px solid #1c4a6c;
  border-radius: 3px;
  background: linear-gradient(150deg, #b4dcee, #7bbbd9 50%, #8fcbe4);
  box-shadow: inset 0 0 0 1px #d4eef8;
}
.task.plain {
  border-color: transparent;
  background: none;
  box-shadow: none;
}
.start + .task.plain {
  margin-left: 5px;
}
.task.current {
  background: linear-gradient(150deg, #e8f5fb, #b4dcec 60%, #c8e6f2);
}
.task.stacked {
  font-family: "Liberation Sans", sans-serif;
  color: #445;
  border-right: 4px double #1c4a6c;
}
.tray {
  display: flex;
  align-items: center;
  margin-left: auto;
  gap: 8px;
  color: #fff;
}
.caret.up.tray-up {
  border-width: 0 4px 4px;
  border-bottom-color: #fff;
  margin-right: 6px;
}
.clock {
  display: flex;
  flex-direction: column;
  align-items: center;
  margin-left: 9px;
  font-size: 11px;
  line-height: 17px;
}
.show-desktop {
  align-self: stretch;
  width: 14px;
  border: 1px solid #6d8cab;
  background: linear-gradient(150deg, #5b7c9c, #1d3f66 60%);
}
```
